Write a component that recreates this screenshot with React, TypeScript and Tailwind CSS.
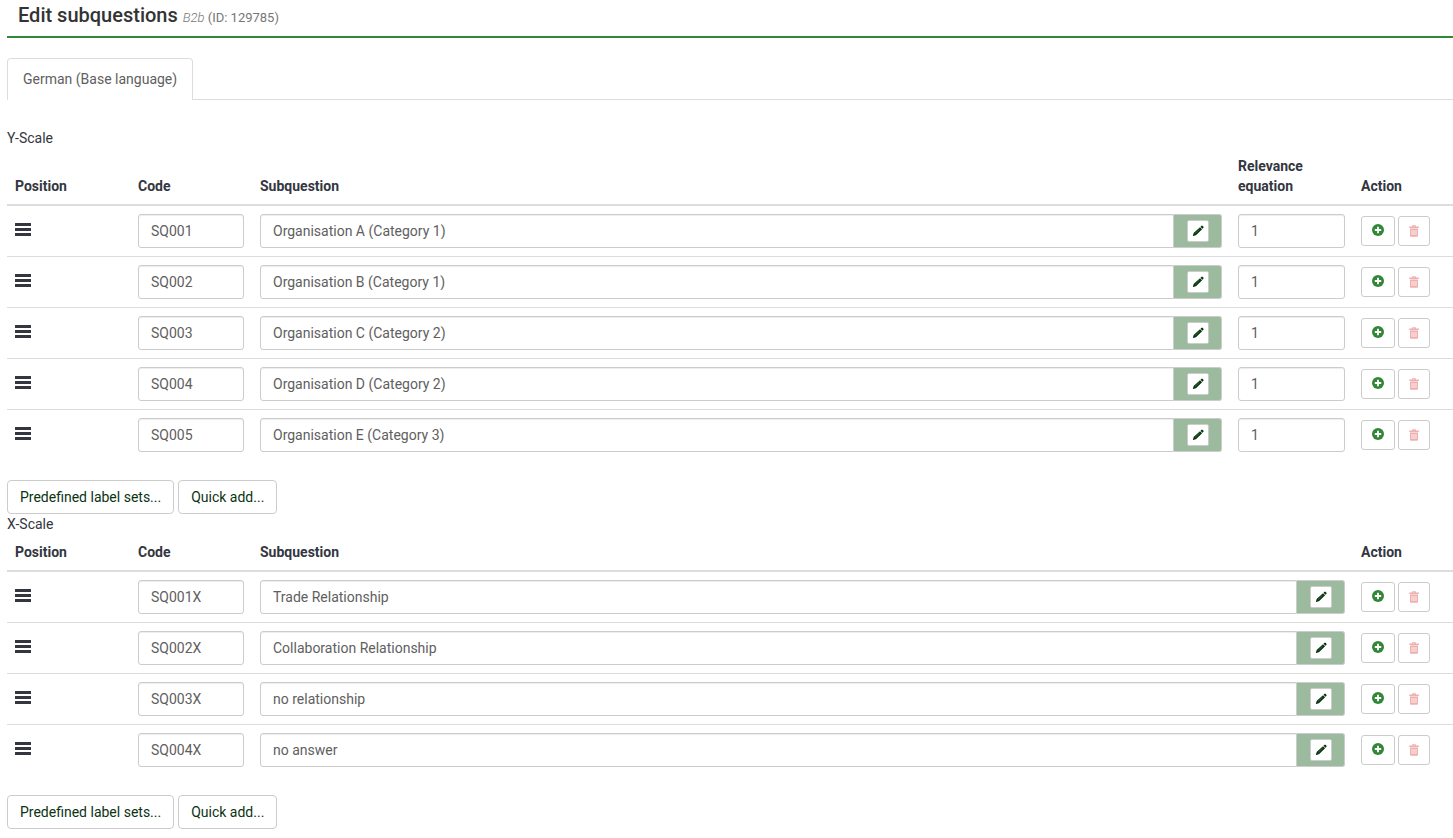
type Row = { code: string; text: string; relevance?: string };

const yRows: Row[] = [
  { code: 'SQ001', text: 'Organisation A (Category 1)', relevance: '1' },
  { code: 'SQ002', text: 'Organisation B (Category 1)', relevance: '1' },
  { code: 'SQ003', text: 'Organisation C (Category 2)', relevance: '1' },
  { code: 'SQ004', text: 'Organisation D (Category 2)', relevance: '1' },
  { code: 'SQ005', text: 'Organisation E (Category 3)', relevance: '1' },
];

const xRows: Row[] = [
  { code: 'SQ001X', text: 'Trade Relationship' },
  { code: 'SQ002X', text: 'Collaboration Relationship' },
  { code: 'SQ003X', text: 'no relationship' },
  { code: 'SQ004X', text: 'no answer' },
];

const inputClass =
  'h-[34px] w-full min-w-0 border border-[#ccc] bg-white px-3 text-sm text-[#606060] shadow-[inset_0_1px_1px_rgba(0,0,0,0.075)] outline-none focus:border-[#328637]';

function BarsIcon() {
  return (
    <svg className="block h-[13px] w-4" viewBox="0 0 16 13" fill="currentColor" aria-hidden="true">
      <rect y="0" width="16" height="3" rx="0.3" />
      <rect y="5" width="16" height="3" rx="0.3" />
      <rect y="10" width="16" height="3" rx="0.3" />
    </svg>
  );
}

function PencilIcon() {
  return (
    <svg className="block size-3" viewBox="0 0 12 12" aria-hidden="true">
      <path
        fill="currentColor"
        d="M8.500 1.700 9.300.9a1 1 0 0 1 1.400 0l.6.6a1 1 0 0 1 0 1.400l-.9.9zM8 2.200l2.100 2.100-5.600 5.500c-.2.200-.4.300-.7.400L1.300 11c-.3.100-.5-.1-.4-.4l.8-2.500c.1-.3.200-.5.400-.7z"
      />
      <path d="M3 8.600l4.600-4.500" stroke="#5e8a63" strokeWidth="0.6" />
    </svg>
  );
}

function PlusIcon() {
  return (
    <svg className="block size-3" viewBox="0 0 12 12" aria-hidden="true">
      <circle cx="6" cy="6" r="6" fill="currentColor" />
      <path d="M6 2.800v6.400M2.800 6h6.400" stroke="#fff" strokeWidth="1.8" />
    </svg>
  );
}

function TrashIcon() {
  return (
    <svg className="block size-3" viewBox="0 0 12 12" fill="currentColor" aria-hidden="true">
      <path
        fillRule="evenodd"
        d="M4 1.600V1c0-.4.3-.7.7-.7h2.600c.4 0 .7.3.7.7v.6h2.800v1.500H1.200V1.600zM5 1.600h2V1.200H5zM2 3.500h8v7.300c0 .5-.4.900-.9.900H2.900c-.5 0-.9-.4-.9-.9zM3.600 4.900v5.200h.8V4.900zM5.600 4.900v5.200h.8V4.900zM7.600 4.900v5.200h.8V4.900z"
      />
    </svg>
  );
}

function ScaleTable({ rows, withRelevance }: { rows: Row[]; withRelevance?: boolean }) {
  return (
    <table className="mb-5 w-full table-fixed border-separate border-spacing-0 text-left text-sm leading-5">
      <colgroup>
        <col className="w-[123px]" />
        <col className="w-[122px]" />
        <col />
        {withRelevance && <col className="w-[123px]" />}
        <col className="w-[100px]" />
      </colgroup>
      <thead>
        <tr className="align-bottom [&>th]:border-b-2 [&>th]:border-[#ddd] [&>th]:p-2 [&>th]:font-bold">
          <th scope="col">Position</th>
          <th scope="col">Code</th>
          <th scope="col">Subquestion</th>
          {withRelevance && <th scope="col">Relevance equation</th>}
          <th scope="col">Action</th>
        </tr>
      </thead>
      <tbody>
        {rows.map((row) => (
          <tr
            key={row.code}
            className="align-top [&>td]:border-t [&>td]:border-[#ddd] [&>td]:p-2 first:[&>td]:border-t-0"
          >
            <td>
              <div className="flex h-[34px] cursor-move items-center pb-[3px]">
                <BarsIcon />
              </div>
            </td>
            <td>
              <input
                aria-label={`Code ${row.code}`}
                defaultValue={row.code}
                className={`${inputClass} block rounded-[3px]`}
              />
            </td>
            <td>
              <div className="flex">
                <input
                  aria-label={`Subquestion ${row.code}`}
                  defaultValue={row.text}
                  className={`${inputClass} flex-1 rounded-l-[3px]`}
                />
                <div className="flex w-12 items-center justify-center rounded-r-[3px] border border-l-0 border-[#ccc] bg-[#9cba9e]">
                  <button
                    type="button"
                    aria-label={`Edit ${row.code}`}
                    className="flex size-[22px] items-center justify-center rounded-[2px] border border-[#ccc] bg-white text-[#0a3310]"
                  >
                    <PencilIcon />
                  </button>
                </div>
              </div>
            </td>
            {withRelevance && (
              <td>
                <input
                  aria-label={`Relevance equation ${row.code}`}
                  defaultValue={row.relevance}
                  className={`${inputClass} block rounded-[3px]`}
                />
              </td>
            )}
            <td>
              <div className="flex h-[34px] items-center gap-[3px]">
                <button
                  type="button"
                  aria-label={`Add after ${row.code}`}
                  className="flex h-[30px] w-[34px] items-center justify-center rounded-[3px] border border-[#ccc] bg-white pb-0.5 text-[#328637]"
                >
                  <PlusIcon />
                </button>
                <button
                  type="button"
                  aria-label={`Delete ${row.code}`}
                  className="flex h-[30px] w-8 items-center justify-center rounded-[3px] border border-[#ccc] bg-white text-[#eeb0ae]"
                >
                  <TrashIcon />
                </button>
              </div>
            </td>
          </tr>
        ))}
      </tbody>
    </table>
  );
}

function ScaleButtons() {
  const cls =
    'h-[34px] rounded-[4px] border border-[#ccc] bg-white px-3 text-sm leading-5 text-[#0a3310] hover:bg-gray-100';
  return (
    <div className="flex gap-1">
      <button type="button" className={cls}>
        Predefined label sets...
      </button>
      <button type="button" className={cls}>
        Quick add...
      </button>
    </div>
  );
}

export default function App() {
  return (
    <main className="bg-white pb-2 pl-[7px] font-['Roboto',sans-serif] text-sm leading-5 text-[#333641]">
      <header className="mb-5 border-b-2 border-[#328637] px-[11px] pt-[3px] pb-[9px]">
        <h1 className="text-xl leading-6 font-medium text-[#333]">
          Edit subquestions{' '}
          <small className="text-[13px] leading-none font-normal text-[#777]">
            <em className="font-light">B2b</em> (ID: 129785)
          </small>
        </h1>
      </header>
      <nav className="mb-7 flex border-b border-[#ddd]">
        <a
          href="#german"
          className="-mb-px rounded-t-[4px] border border-b-0 border-[#ddd] bg-white px-[15px] pt-2.5 pb-[11px] text-[#606060]"
        >
          German (Base language)
        </a>
      </nav>
      <section>
        <h2>Y-Scale</h2>
        <ScaleTable rows={yRows} withRelevance />
        <ScaleButtons />
      </section>
      <section>
        <h2>X-Scale</h2>
        <ScaleTable rows={xRows} />
        <ScaleButtons />
      </section>
    </main>
  );
}
